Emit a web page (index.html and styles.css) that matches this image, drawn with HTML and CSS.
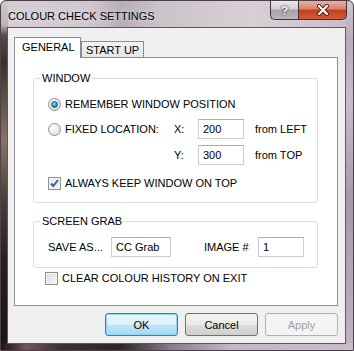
FILE: index.html
```html
<!DOCTYPE html>
<html lang="en">

<head>
    <meta charset="UTF-8">
    <meta name="viewport" content="width=device-width, initial-scale=1">
    <title>Colour Check Settings</title>
    <link rel="stylesheet" href="styles.css">
</head>

<body>

    <div class="window">
        <div class="titlebar">
            <span class="title">COLOUR CHECK SETTINGS</span>
            <div class="caption">
                <span class="cap-btn help">?</span>
                <span class="cap-btn close">
                    <svg width="14" height="12" viewBox="0 0 14 12">
                        <path d="M3 2 L11 10 M11 2 L3 10" stroke="#4a2018" stroke-width="4" stroke-linecap="round" />
                        <path d="M3 2 L11 10 M11 2 L3 10" stroke="#fff" stroke-width="2.2" stroke-linecap="round" />
                    </svg>
                </span>
            </div>
        </div>

        <div class="client">
            <div class="tabs">
                <span class="tab active">GENERAL</span>
                <span class="tab">START UP</span>
            </div>

            <div class="panel">
                <fieldset class="group group-window">
                    <legend>WINDOW</legend>
                    <div class="row">
                        <span class="radio on"><span class="dot"></span></span>
                        <span class="label">REMEMBER WINDOW POSITION</span>
                    </div>
                    <div class="row">
                        <span class="choice">
                            <span class="radio"></span>
                            <span class="label">FIXED LOCATION:</span>
                        </span>
                        <span class="axis">X:</span>
                        <span class="field coord">200</span>
                        <span class="hint">from LEFT</span>
                    </div>
                    <div class="row row-y">
                        <span class="axis">Y:</span>
                        <span class="field coord">300</span>
                        <span class="hint">from TOP</span>
                    </div>
                    <div class="row row-check">
                        <span class="check on">
                            <svg width="11" height="11" viewBox="0 0 11 11">
                                <path d="M2 5.5 L4.3 8 L9 2" fill="none" stroke="#3d5a9e" stroke-width="2" />
                            </svg>
                        </span>
                        <span class="label">ALWAYS KEEP WINDOW ON TOP</span>
                    </div>
                </fieldset>

                <fieldset class="group group-grab">
                    <legend>SCREEN GRAB</legend>
                    <div class="row">
                        <span class="save-label">SAVE AS...</span>
                        <span class="field name">CC Grab</span>
                        <span class="image-label">IMAGE #</span>
                        <span class="field number">1</span>
                    </div>
                </fieldset>

                <div class="row row-clear">
                    <span class="check"></span>
                    <span class="label">CLEAR COLOUR HISTORY ON EXIT</span>
                </div>
            </div>

            <div class="buttons">
                <button class="btn default">OK</button>
                <button class="btn">Cancel</button>
                <button class="btn" disabled>Apply</button>
            </div>
        </div>
    </div>

</body>

</html>
```

FILE: styles.css
```css
* {
    box-sizing: border-box;
}

html,
body {
    margin: 0;
}

body {
    width: 354px;
    height: 351px;
    background-color: #fff;
    font-family: "Liberation Sans", Arial, sans-serif;
    font-size: 11px;
    color: #000;
}

.window {
    width: 354px;
    height: 351px;
    display: flex;
    flex-direction: column;
    padding: 0 7px 6px 6px;
    border: 1px solid #4a4048;
    border-radius: 6px 6px 0 0;
    background:
        linear-gradient(to right, #1e1818 0, #3a2a2c 10px, #7a5260 25px, #3c3034 60px, #2c2628 120px, #8a7c8a 170px, #c4b6c4 230px, #cabccb 354px) 0 100% / 100% 7px no-repeat,
        linear-gradient(to bottom, #cfc8cf 0, #bdb3bb 24px, #5a4c48 34px, #3a302c 60px, #8a7262 140px, #4a3c38 200px, #262020 260px, #181414 351px) 0 0 / 7px 100% no-repeat,
        linear-gradient(to bottom, #cfc6ce 0, #b9aab9 40px, #c9bbc9 100px, #a996aa 200px, #c2b2c2 351px) 100% 0 / 8px 100% no-repeat,
        linear-gradient(to right, #d5ced4 0, #cfc7ce 90px, #b7adb6 120px, #cbc3ca 160px, #d8d0d6 250px, #c8bcc8 354px);
}

/* title bar */

.titlebar {
    height: 26px;
    display: flex;
    justify-content: space-between;
    align-items: flex-start;
}

.title {
    font-size: 11px;
    line-height: 14px;
    margin-top: 8px;
    margin-left: 1px;
    text-shadow: 0 0 6px rgba(255, 255, 255, 0.8);
}

.caption {
    display: flex;
    margin-right: -1px;
}

.cap-btn {
    height: 19px;
    display: flex;
    align-items: center;
    justify-content: center;
    border: 1px solid #3a3438;
    border-top: none;
}

.help {
    width: 28px;
    border-right: none;
    border-radius: 0 0 0 5px;
    background: linear-gradient(#ece8ec, #d4ccd4 45%, #a9a0aa 50%, #bdb5be 100%);
    color: #fff;
    font-weight: bold;
    font-size: 13px;
    text-shadow: 0 0 2px #222, 0 0 1px #222;
}

.close {
    width: 49px;
    border-radius: 0 0 5px 0;
    background: linear-gradient(#eab0a0, #d9826a 45%, #c53d1f 50%, #d35a38 100%);
}

/* dialog body */

.client {
    flex: 1;
    display: flex;
    flex-direction: column;
    padding: 9px 7px 7px 6px;
    border: 1px solid #5c5860;
    background-color: #f0f0f0;
}

.tabs {
    height: 20px;
    display: flex;
    align-items: flex-end;
}

.tab {
    height: 16px;
    padding: 0 4px;
    display: flex;
    align-items: center;
    border: 1px solid #898c95;
    border-bottom: none;
    background: linear-gradient(#f3f3f3, #e6e6e6);
}

.tab.active {
    position: relative;
    z-index: 1;
    width: 67px;
    height: 21px;
    margin-bottom: -1px;
    padding: 0 0 2px 7px;
    background-color: #fff;
    background-image: none;
}

.panel {
    flex: 1;
    border: 1px solid #898c95;
    background-color: #fff;
}

.group {
    width: 285px;
    margin: 14px 0 0 18px;
    padding: 9px 0 9px 14px;
    border: 1px solid #d5dfe5;
    border-radius: 3px;
}

.group legend {
    padding: 0 2px;
    margin-left: -8px;
    line-height: 13px;
}

.group-grab {
    margin-top: 12px;
    padding-bottom: 10px;
}

.row {
    height: 20px;
    display: flex;
    align-items: center;
    margin-top: 5px;
}

.row:first-of-type {
    margin-top: 0;
}

.row-y {
    margin-top: 6px;
    padding-left: 126px;
}

.row-check {
    margin-top: 8px;
}

.row-clear {
    margin: 9px 0 0 30px;
}

.label {
    margin-left: 4px;
}

.choice {
    width: 126px;
    display: flex;
    align-items: center;
}

.axis {
    width: 24px;
}

.hint {
    margin-left: 11px;
}

.field {
    height: 20px;
    display: flex;
    align-items: center;
    padding-left: 4px;
    border: 1px solid #c9ccd1;
    border-top-color: #abadb3;
    background-color: #fff;
}

.coord {
    width: 46px;
}

.save-label {
    width: 63px;
}

.name {
    width: 60px;
}

.image-label {
    width: 54px;
    margin-left: 33px;
}

.number {
    width: 46px;
}

/* radio and check boxes */

.radio {
    width: 13px;
    height: 13px;
    flex: none;
    display: flex;
    align-items: center;
    justify-content: center;
    border: 1px solid #8e8f8f;
    border-radius: 50%;
    background: radial-gradient(circle at 40% 35%, #fdfdfd, #e4e4e4 65%, #cfcfcf);
}

.dot {
    width: 7px;
    height: 7px;
    border-radius: 50%;
    border: 1px solid #1d5583;
    background: radial-gradient(circle at 40% 35%, #8fe0f7, #2a8ac6 60%, #145c94);
}

.check {
    width: 13px;
    height: 13px;
    flex: none;
    display: flex;
    align-items: center;
    justify-content: center;
    border: 1px solid #8e8f8f;
    background: linear-gradient(135deg, #dcdcdc, #f6f6f6);
    box-shadow: inset 0 0 0 1px #f4f4f4;
}

.check.on {
    background: linear-gradient(135deg, #dde6f2, #f6f8fb);
}

/* buttons */

.buttons {
    display: flex;
    justify-content: flex-end;
    gap: 7px;
    margin-top: 7px;
}

.btn {
    width: 73px;
    height: 23px;
    padding: 0;
    border: 1px solid #707070;
    border-radius: 3px;
    background: linear-gradient(#f2f2f2, #ebebeb 50%, #dddddd 51%, #cfcfcf);
    font-family: "Liberation Sans", Arial, sans-serif;
    font-size: 11px;
    color: #000;
}

.btn.default {
    border-color: #3c7fb1;
    background: linear-gradient(#eaf6fd, #d9f0fc 50%, #bee6fd 51%, #a7d9f5);
    box-shadow: inset 0 0 0 1px #8fd4f3;
}

.btn:disabled {
    border-color: #adb2b5;
    background: #f4f4f4;
    color: #a0a0a0;
}
```
